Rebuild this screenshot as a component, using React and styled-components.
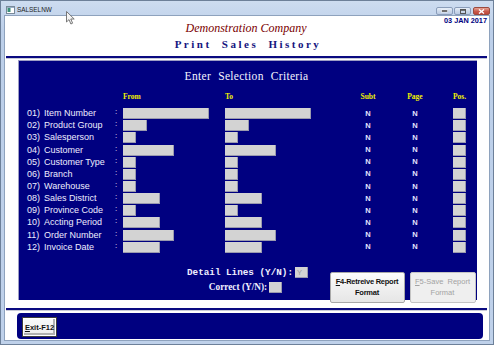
import React from 'react';
import styled, { createGlobalStyle } from 'styled-components';

const Global = createGlobalStyle`
  html, body { margin: 0; padding: 0; background: #fff; overflow: hidden; }
  #root { width: 494px; height: 345px; }
`;

const Window = styled.div`
  position: relative;
  width: 494px;
  height: 345px;
  box-sizing: border-box;
  display: flex;
  flex-direction: column;
  background: linear-gradient(#cddcf0, #bccfe9 30px, #bfd1ea);
  border: 1px solid #6d8099;
  padding: 0 3px 3px 3px;
  font-family: "Liberation Sans", Arial, sans-serif;
`;

const TitleBar = styled.div`
  height: 14px;
  box-sizing: border-box;
  display: flex;
  align-items: center;
  padding: 4px 0 0 2px;
  position: relative;
`;

const AppIcon = styled.svg`
  width: 9px;
  height: 8px;
  margin-right: 2px;
`;

const TitleText = styled.span`
  font-size: 6.4px;
  line-height: 8px;
  color: #1b1b1b;
`;

const Controls = styled.div`
  margin-left: auto;
  align-self: flex-start;
  margin-top: 2px;
  display: flex;
  gap: 1px;
`;

const Ctl = styled.div`
  width: ${p => p.$w}px;
  height: 8px;
  box-sizing: border-box;
  border: 1px solid ${p => (p.$close ? '#9b4a3e' : '#8a9dba')};
  border-radius: 2px;
  background: ${p => (p.$close ? 'linear-gradient(#e7a496, #c9594a 55%, #c0483a)' : 'linear-gradient(#e7eef8, #cbd8ea 55%, #bccce3)')};
  margin-left: ${p => p.$ml || 0}px;
  display: flex;
  align-items: center;
  justify-content: center;
`;

const Cursor = styled.svg`
  position: absolute;
  left: 62px;
  top: 10px;
  width: 10px;
  height: 14px;
`;

const Client = styled.div`
  flex: 1;
  background: #fff;
  border: 1px solid #8ea2bd;
  display: flex;
  flex-direction: column;
`;

const Header = styled.div`
  height: 40px;
  display: grid;
  grid-template-columns: 1fr auto 1fr;
  grid-template-rows: 22px 18px;
  padding-right: 2px;
`;

const Company = styled.div`
  grid-column: 2;
  margin-top: 5px;
  line-height: 14px;
  font-family: "Liberation Serif", "Times New Roman", serif;
  font-style: italic;
  font-size: 12px;
  color: #7a0000;
`;

const DateText = styled.div`
  grid-column: 3;
  justify-self: end;
  line-height: 9px;
  font-size: 7.3px;
  font-weight: bold;
  color: #000080;
`;

const ScreenTitle = styled.div`
  grid-column: 1 / 4;
  text-align: center;
  line-height: 12px;
  font-family: "Liberation Serif", "Times New Roman", serif;
  font-weight: bold;
  font-size: 11px;
  letter-spacing: 2.5px;
  word-spacing: 5px;
  color: #151580;
  padding-left: 4px;
`;

const Rule = styled.div`
  margin: ${p => p.$mt || 0}px 2px 0 1px;
  height: 2px;
  background: #0a0a80;
  border-bottom: 1px solid #c8cad8;
`;

const Panel = styled.div`
  margin: 1px 12px 0 13px;
  height: 240px;
  background: #000080;
  box-shadow: inset 1px 1px 0 #9d9dc4;
  padding-top: 9px;
  box-sizing: border-box;
  display: flex;
  flex-direction: column;
  color: #fff;
`;

const PanelTitle = styled.div`
  text-align: center;
  line-height: 14px;
  font-family: "Liberation Serif", "Times New Roman", serif;
  font-size: 11.5px;
  letter-spacing: 0.3px;
  word-spacing: 4px;
  color: #f4f4ff;
  padding-right: 2px;
`;

const gridCols = `17px 70px 9px 102px 125px 36px 58px 9px 13px`;

const ColHeads = styled.div`
  margin-top: 9px;
  height: 10px;
  display: grid;
  grid-template-columns: ${gridCols};
  padding-left: 9px;
  align-items: center;
`;

const ColHead = styled.div`
  grid-column: ${p => p.$col};
  justify-self: ${p => (p.$center ? 'center' : 'start')};
  font-family: "Liberation Serif", "Times New Roman", serif;
  font-weight: bold;
  font-size: 7.5px;
  line-height: 10px;
  color: #f0f000;
  white-space: nowrap;
`;

const Rows = styled.div`
  margin-top: 5.6px;
  display: grid;
  grid-template-columns: ${gridCols};
  grid-auto-rows: 12.15px;
  align-items: center;
  padding-left: 9px;
`;

const Label = styled.div`
  font-size: 9px;
  line-height: 11px;
  color: #eeeeff;
  white-space: nowrap;
`;

const Colon = styled.div`
  font-size: 8px;
  line-height: 8px;
  color: #eeeeff;
  margin-top: -3px;
  padding-left: 1px;
`;

const Field = styled.div`
  width: ${p => p.$w}px;
  height: 11px;
  box-sizing: border-box;
  background: #d3d3d3;
  box-shadow: inset -1px -1px 0 #9a9aae;
`;

const Flag = styled.div`
  justify-self: center;
  font-size: 7.5px;
  font-weight: bold;
  line-height: 10px;
  color: #e4e4ff;
`;

const Footer = styled.div`
  margin-top: 13.6px;
  display: grid;
  grid-template-columns: 1fr auto 1fr;
`;

const YNBlock = styled.div`
  grid-column: 2;
  display: flex;
  flex-direction: column;
  align-items: center;
  gap: 4px;
`;

const YNRow = styled.div`
  display: flex;
  align-items: center;
  gap: 2px;
  height: 11px;
  padding-right: ${p => p.$pr || 0}px;
`;

const YNLabel = styled.span`
  font-family: ${p => (p.$mono ? '"Liberation Mono", "Courier New", monospace' : '"Liberation Serif", "Times New Roman", serif')};
  font-weight: bold;
  font-size: ${p => p.$size}px;
  color: #f0f0ff;
  white-space: pre;
  line-height: 11px;
`;

const YNBox = styled.div`
  width: 13px;
  height: 11px;
  box-sizing: border-box;
  background: #d3d3d3;
  box-shadow: inset -1px -1px 0 #9a9aae;
  font-size: 7.5px;
  line-height: 11px;
  color: #9c9c9c;
  padding-left: 2px;
`;

const Buttons = styled.div`
  grid-column: 3;
  display: flex;
  gap: 5px;
  margin-left: 21.5px;
  margin-top: 5px;
`;

const Button = styled.div`
  width: ${p => p.$w}px;
  height: 31px;
  box-sizing: border-box;
  background: ${p => (p.$disabled ? '#efefef' : 'linear-gradient(#fdfdfd, #f0f0f0 50%, #e6e6e6)')};
  border: 1px solid ${p => (p.$disabled ? '#c4c4c4' : '#a8a8a8')};
  border-radius: 2px;
  display: flex;
  flex-direction: column;
  align-items: center;
  justify-content: center;
  text-align: center;
  font-size: 7.5px;
  line-height: 11px;
  font-weight: ${p => (p.$disabled ? 'normal' : 'bold')};
  letter-spacing: ${p => (p.$disabled ? '0' : '-0.25px')};
  color: ${p => (p.$disabled ? '#a3a3a3' : '#111')};
  white-space: pre;
`;

const Mn = styled.span`
  text-decoration: underline;
`;

const BottomBar = styled.div`
  margin: 2px 6px 0 12px;
  height: 26px;
  box-sizing: border-box;
  background: #000080;
  border-radius: 4px;
  padding: 4px 5px;
  display: flex;
  align-items: flex-start;
`;

const ExitButton = styled.div`
  width: 35px;
  height: 20px;
  box-sizing: border-box;
  border: 1px solid #3c3c3c;
  background: linear-gradient(#fafafa, #ececec);
  box-shadow: inset 0 0 0 1px #ffffff, inset -1px -1px 0 2px #b0b0b0;
  display: flex;
  align-items: center;
  justify-content: center;
  font-size: 7.5px;
  font-weight: bold;
  color: #111;
`;

const rows = [
  ['01)', 'Item Number', 86],
  ['02)', 'Product Group', 24],
  ['03)', 'Salesperson', 13],
  ['04)', 'Customer', 51],
  ['05)', 'Customer Type', 13],
  ['06)', 'Branch', 13],
  ['07)', 'Warehouse', 13],
  ['08)', 'Sales District', 37],
  ['09)', 'Province Code', 13],
  ['10)', 'Accting Period', 37],
  ['11)', 'Order Number', 51],
  ['12)', 'Invoice Date', 37],
];

export default function App() {
  return (
    <>
      <Global />
      <Window>
        <TitleBar>
          <AppIcon viewBox="0 0 9 8">
            <rect x="0.5" y="0.5" width="8" height="7" fill="#fff" stroke="#7a8a9a" />
            <rect x="1.5" y="2" width="3" height="4" fill="#3b8f7a" />
            <rect x="1" y="1" width="7" height="1" fill="#9ab0c8" />
          </AppIcon>
          <TitleText>SALSELNW</TitleText>
          <Controls>
            <Ctl $w={17}>
              <svg width="7" height="4" viewBox="0 0 7 4"><rect x="0.5" y="1" width="6" height="2" fill="#333" stroke="#fff" strokeWidth="0.6" /></svg>
            </Ctl>
            <Ctl $w={17}>
              <svg width="6" height="5" viewBox="0 0 6 5"><rect x="0.5" y="0.5" width="5" height="4" fill="none" stroke="#555" strokeWidth="1" /><rect x="0.5" y="0.5" width="5" height="1.3" fill="#555" /></svg>
            </Ctl>
            <Ctl $w={17} $close $ml={1}>
              <svg width="7" height="5" viewBox="0 0 7 5"><path d="M1 0.5 L6 4.5 M6 0.5 L1 4.5" stroke="#fff" strokeWidth="1.4" /></svg>
            </Ctl>
          </Controls>
          <Cursor viewBox="0 0 10 14">
            <path d="M0.5 0.5 L0.5 11 L3 8.6 L4.9 13 L6.6 12.2 L4.8 8 L8.2 8 Z" fill="#f4f4f4" stroke="#6a6a6a" strokeWidth="0.9" strokeLinejoin="round" />
          </Cursor>
        </TitleBar>
        <Client>
          <Header>
            <Company>Demonstration Company</Company>
            <DateText>03 JAN 2017</DateText>
            <ScreenTitle>Print Sales History</ScreenTitle>
          </Header>
          <Rule />
          <Panel>
            <PanelTitle>Enter Selection Criteria</PanelTitle>
            <ColHeads>
              <ColHead $col={4}>From</ColHead>
              <ColHead $col={5}>To</ColHead>
              <ColHead $col={6} $center>Subt</ColHead>
              <ColHead $col={7} $center>Page</ColHead>
              <ColHead $col={9} $center>Pos.</ColHead>
            </ColHeads>
            <Rows>
              {rows.map(([num, name, w]) => (
                <React.Fragment key={num}>
                  <Label>{num}</Label>
                  <Label>{name}</Label>
                  <Colon>:</Colon>
                  <Field $w={w} />
                  <Field $w={w} />
                  <Flag>N</Flag>
                  <Flag>N</Flag>
                  <span />
                  <Field $w={13} />
                </React.Fragment>
              ))}
            </Rows>
            <Footer>
              <YNBlock>
                <YNRow>
                  <YNLabel $mono $size={9.3}>Detail Lines (Y/N):</YNLabel>
                  <YNBox>Y</YNBox>
                </YNRow>
                <YNRow $pr={4}>
                  <YNLabel $size={9.3}>Correct (Y/N):</YNLabel>
                  <YNBox />
                </YNRow>
              </YNBlock>
              <Buttons>
                <Button $w={75}>
                  <span><Mn>F</Mn>4-Retreive Report</span>
                  <span>Format</span>
                </Button>
                <Button $w={66} $disabled>
                  <span><Mn>F</Mn>5-Save  Report</span>
                  <span>Format</span>
                </Button>
              </Buttons>
            </Footer>
          </Panel>
          <Rule $mt={8} />
          <BottomBar>
            <ExitButton>
              <span><Mn>E</Mn>xit-F12</span>
            </ExitButton>
          </BottomBar>
        </Client>
      </Window>
    </>
  );
}
